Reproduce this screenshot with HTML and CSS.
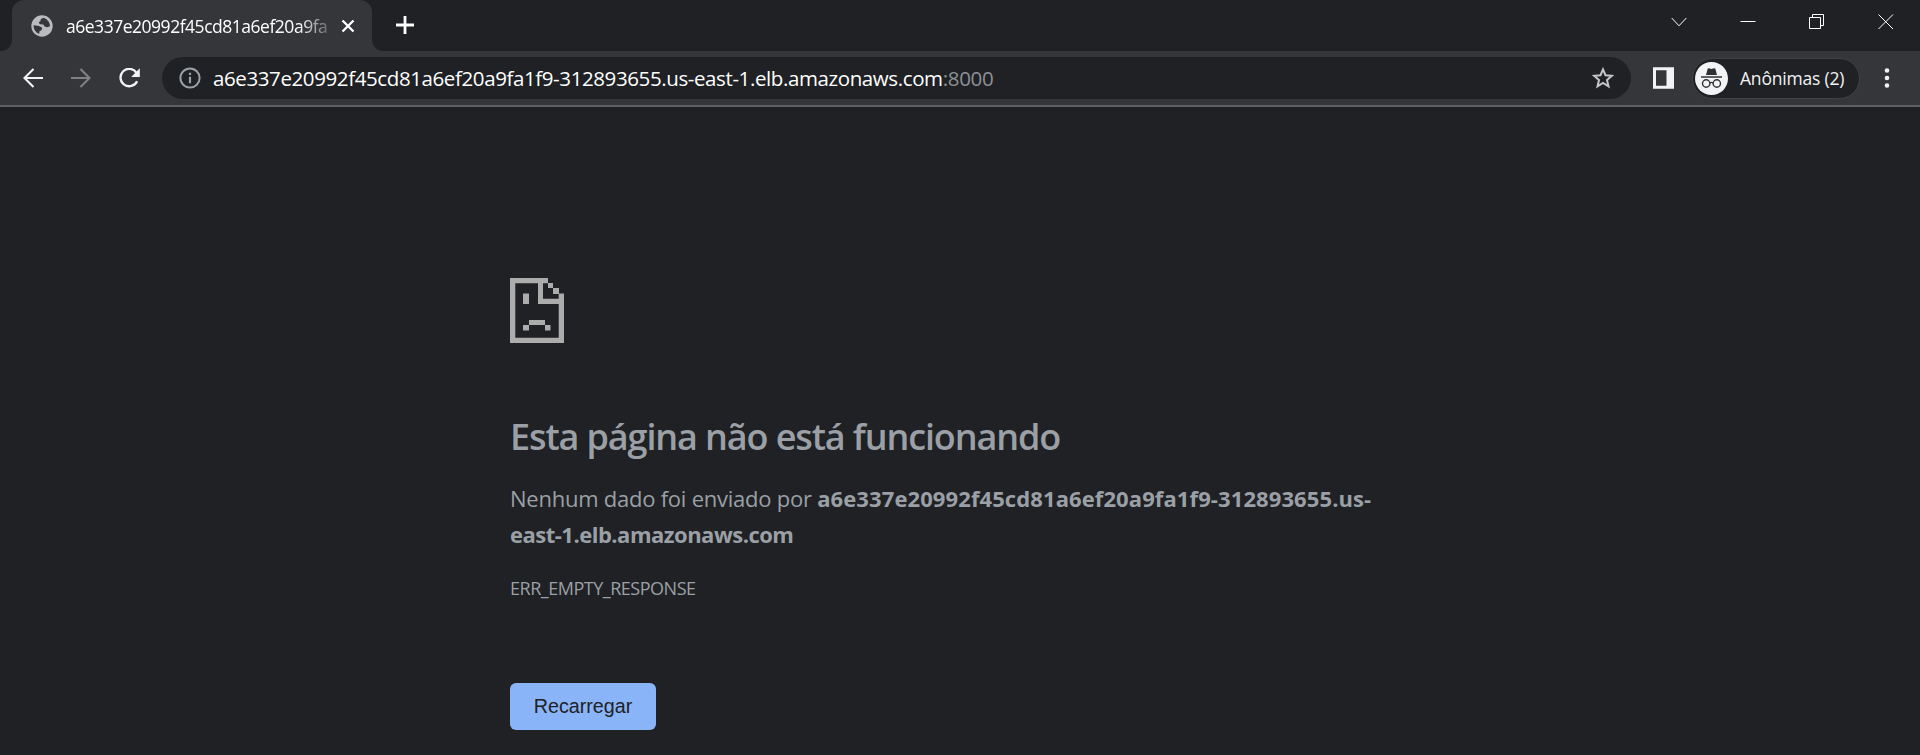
FILE: index.html
```html
<!DOCTYPE html>
<html lang="pt-BR">
<head>
<meta charset="utf-8">
<title>a6e337e20992f45cd81a6ef20a9fa1f9-312893655.us-east-1.elb.amazonaws.com</title>
<link rel="stylesheet" href="styles.css">
</head>
<body>
<header class="tabstrip">
  <div class="previous-edge"></div>
  <div class="tab">
    <svg class="globe" width="22" height="22" viewBox="0 0 22 22"><circle cx="11" cy="11" r="10.7" fill="#b9bbbe"/><path d="M12.5 2.8 9.7 4.2 9.5 6 7.6 7.4 9 9.2 12.3 9.4 13.6 11.5 16 12.2 19 11.3C19 8.500 17.300 4.400 12.500 2.800ZM2.600 10.200 8 11 11.200 12.800 10.500 15.200 8.500 16.200 8.200 18.800C4.500 17.500 2.500 14 2.600 10.200Z" fill="#35363a"/></svg>
    <span class="tab-title">a6e337e20992f45cd81a6ef20a9fa</span>
    <svg class="tab-close" width="14" height="14" viewBox="0 0 14 14"><path d="M1.500 1.500 12.500 12.500M12.500 1.500 1.500 12.500" stroke="#fff" stroke-width="2.300"/></svg>
  </div>
  <svg class="new-tab" width="18" height="18" viewBox="0 0 18 18"><path d="M9 0V18M0 9H18" stroke="#fff" stroke-width="2.800"/></svg>
  <div class="window-controls">
    <svg width="16" height="16" viewBox="0 0 16 16"><path d="M.7 4 8 11.800 15.300 4"/></svg>
    <svg width="16" height="16" viewBox="0 0 16 16"><path d="M.5 7.500H15.500"/></svg>
    <svg width="16" height="16" viewBox="0 0 16 16"><path d="M.5 3.500H11.500V14.500H.5ZM3.500 3.500V.5H14.500V11.500H11.500"/></svg>
    <svg width="16" height="16" viewBox="0 0 16 16"><path d="M.5.5 15 15M15 .5.5 15"/></svg>
  </div>
</header>
<nav class="toolbar">
  <div class="nav-icons">
    <svg width="20" height="20" viewBox="0 0 20 20"><path d="M20 10H1.600M10.500.900 1.500 10 10.500 19.100" fill="none" stroke="#f1f3f4" stroke-width="2.100"/></svg>
    <svg width="20" height="20" viewBox="0 0 20 20"><path d="M0 10H18.400M9.500.900 18.500 10 9.500 19.100" fill="none" stroke="#808184" stroke-width="2.100"/></svg>
    <svg width="21" height="20" viewBox="0 0 21 20"><path d="M17.500 4.800A8.700 8.700 0 1 0 18.100 13.200" fill="none" stroke="#f1f3f4" stroke-width="2.300"/><path d="M20.800.300V9H12.200Z" fill="#f1f3f4"/></svg>
  </div>
  <div class="omnibox">
    <svg class="info" width="22" height="22" viewBox="0 0 22 22"><circle cx="11" cy="11" r="9.600" fill="none" stroke="#9aa0a6" stroke-width="2"/><path d="M11 9.800V16.200M11 5.800V8" stroke="#9aa0a6" stroke-width="2.200"/></svg>
    <div class="url"><span class="host">a6e337e20992f45cd81a6ef20a9fa1f9-312893655.us-east-1.elb.amazonaws.com</span><span class="port">:8000</span></div>
    <svg class="star" width="22" height="22" viewBox="0 0 22 22"><path d="M11 2.400 13.500 8.200 19.800 8.800 15 13 16.500 19.300 11 16 5.500 19.300 7 13 2.200 8.800 8.500 8.200Z" fill="none" stroke="#c4c6c9" stroke-width="2"/></svg>
  </div>
  <svg class="panel" width="22" height="22" viewBox="0 0 22 22"><path fill="#f1f3f4" fill-rule="evenodd" d="M0 .300H21V21.700H0ZM3 3.300V18.700H13.500V3.300Z"/></svg>
  <div class="profile">
    <svg width="33" height="33" viewBox="0 0 33 33"><circle cx="16.500" cy="16.500" r="16.500" fill="#f1f3f4"/><path d="M11 13 12.600 7Q12.900 6 14 6.300L16.500 7 19 6.300Q20.100 6 20.400 7L22 13ZM6 14.300H27V15.700H6Z" fill="#303134"/><g fill="none" stroke="#303134" stroke-width="1.400"><circle cx="11.200" cy="21.500" r="3.700"/><circle cx="21.800" cy="21.500" r="3.700"/><path d="M14.800 21Q16.500 19.800 18.200 21"/></g></svg>
    <span class="profile-name">Anônimas (2)</span>
  </div>
  <svg class="menu" width="6" height="20" viewBox="0 0 6 20"><g fill="#f1f3f4"><circle cx="3" cy="2.500" r="2.300"/><circle cx="3" cy="10" r="2.300"/><circle cx="3" cy="17.500" r="2.300"/></g></svg>
</nav>
<main class="error-page">
  <svg class="sad-page" width="54" height="66" viewBox="0 0 54 66"><path fill="#acacac" fill-rule="evenodd" d="M0 0H38V5H43V10H49V15.500H54V65H0ZM5.300 5.300V59.700H48.700V26H28V5.300ZM33 5.300V20.700H48.700V16H43V10H38V5.300Z"/><path fill="#acacac" d="M13 15.500H19V26H13ZM19 42H35V47H19ZM13 47H19V52.500H13ZM35 47H40.500V52.500H35Z"/></svg>
  <h1 class="heading">Esta página não está funcionando</h1>
  <p class="message"><span class="message-lead">Nenhum dado foi enviado por </span><strong><span class="host-start">a6e337e20992f45cd81a6ef20a9fa1f9-312893655.us-</span><br><span class="host-end">east-1.elb.amazonaws.com</span></strong></p>
  <div class="code">ERR_EMPTY_RESPONSE</div>
  <button class="reload">Recarregar</button>
</main>
</body>
</html>
```
FILE: styles.css
```css
* { box-sizing: border-box; }
body {
  margin: 0;
  height: 755px;
  overflow: hidden;
  background: #202124;
  color: #9aa0a6;
  font-family: "Open Sans", "Noto Sans", sans-serif;
}
svg { display: block; flex: none; }
.tabstrip { display: flex; height: 51px; background: linear-gradient(#35363a, #35363a) 0 100% / 384px 12px no-repeat #202124; }
.previous-edge { width: 12px; background: #202124; border-bottom-right-radius: 11px; }
.tab {
  display: flex;
  align-items: center;
  width: 360px;
  height: 51px;
  padding: 0 0 0 19px;
  background: #35363a;
  border-radius: 12px 12px 0 0;
}
.tab-title {
  width: 268px;
  margin-left: 13px;
  white-space: nowrap;
  color: #fff;
  font-size: 17.500px;
  line-height: 24px;
  letter-spacing: -.48px;
  -webkit-mask-image: linear-gradient(90deg, #000 232px, transparent 272px);
  mask-image: linear-gradient(90deg, #000 232px, transparent 272px);
}
.tab-close { margin-left: 7px; }
.new-tab {
  box-sizing: content-box;
  padding: 16px 0 17px 24px;
  background: #202124;
  border-bottom-left-radius: 11px;
}
.window-controls { display: flex; gap: 53px; margin: 14px 26px 0 auto; }
.window-controls svg { fill: none; stroke: #fff; stroke-width: 1; }
.toolbar {
  display: flex;
  align-items: center;
  height: 56px;
  padding: 0 30px 0 23px;
  background: #35363a;
  border-bottom: 2px solid #5f6063;
}
.nav-icons { display: flex; gap: 28px; width: 139px; }
.omnibox {
  display: flex;
  align-items: center;
  width: 1469px;
  height: 42px;
  padding: 0 17px;
  border-radius: 21px;
  background: #202124;
}
.url { margin-left: 12px; white-space: nowrap; font-size: 20.500px; line-height: 28px; }
.host { color: #fff; letter-spacing: -.395px; }
.port { color: #8e9196; letter-spacing: -.3px; }
.star { margin-left: auto; }
.panel { margin-left: 22px; }
.profile {
  display: flex;
  align-items: center;
  width: 168px;
  height: 41px;
  margin-left: 17px;
  padding-left: 2px;
  border: 1px solid #414246;
  border-radius: 21px;
  background: #202124;
}
.profile-name { margin-left: 12px; color: #f1f3f4; font-size: 17.500px; line-height: 24px; white-space: nowrap; letter-spacing: -.2px; }
.menu { margin-left: auto; }
.error-page { width: 900px; margin-left: 510px; padding-top: 171px; }
.heading { margin: 69px 0 0; font-size: 36px; line-height: 48px; font-weight: 600; letter-spacing: -1.120px; white-space: nowrap; }
.message { margin: 19px 0 0; font-size: 22px; line-height: 36px; white-space: nowrap; }
.message-lead { letter-spacing: -.24px; }
.host-start { letter-spacing: .1px; }
.host-end { letter-spacing: -.5px; }
.code { margin-top: 24px; font-size: 18px; line-height: 24px; letter-spacing: -.48px; }
.reload {
  display: block;
  width: 146px;
  height: 47px;
  margin-top: 83px;
  padding: 0;
  border: 0;
  border-radius: 6px;
  background: #8ab4f8;
  color: #202124;
  font: 19.700px "Liberation Sans", Arial, sans-serif;
}
```
